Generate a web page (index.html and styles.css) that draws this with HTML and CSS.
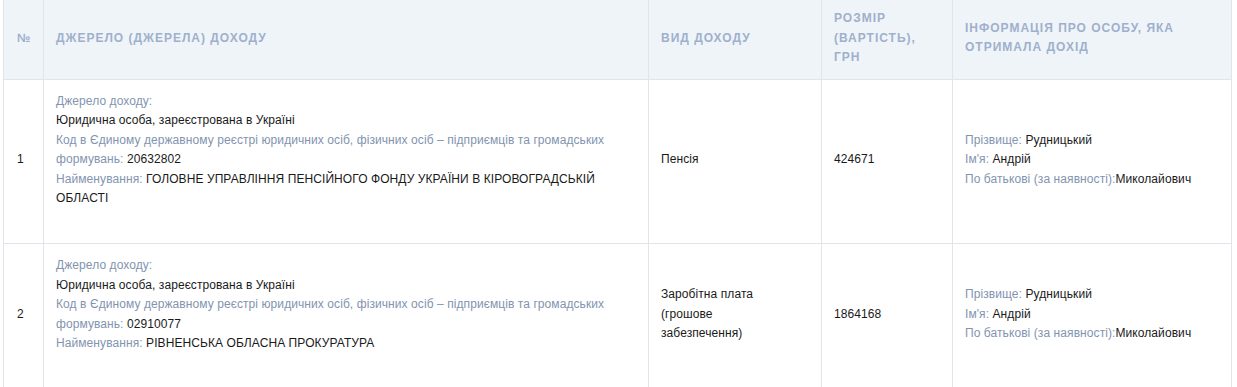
FILE: index.html
```html
<!DOCTYPE html>
<html lang="uk">
<head>
<meta charset="utf-8">
<link rel="stylesheet" href="styles.css">
</head>
<body>
<table class="income">
  <colgroup>
    <col class="c-num">
    <col class="c-src">
    <col class="c-type">
    <col class="c-size">
    <col class="c-info">
  </colgroup>
  <thead>
    <tr>
      <th>№</th>
      <th>Джерело (джерела) доходу</th>
      <th>Вид доходу</th>
      <th>Розмір (вартість), грн</th>
      <th>Інформація про особу, яка отримала дохід</th>
    </tr>
  </thead>
  <tbody>
    <tr>
      <td>1</td>
      <td class="src">
        <div class="lbl">Джерело доходу:</div>
        <div>Юридична особа, зареєстрована в Україні</div>
        <div><span class="lbl">Код в Єдиному державному реєстрі юридичних осіб, фізичних осіб – підприємців та громадських формувань: </span>20632802</div>
        <div><span class="lbl">Найменування: </span>ГОЛОВНЕ УПРАВЛІННЯ ПЕНСІЙНОГО ФОНДУ УКРАЇНИ В КІРОВОГРАДСЬКІЙ ОБЛАСТІ</div>
      </td>
      <td><div class="type">Пенсія</div></td>
      <td>424671</td>
      <td>
        <div><span class="lbl">Прізвище: </span>Рудницький</div>
        <div><span class="lbl">Ім'я: </span>Андрій</div>
        <div><span class="lbl">По батькові (за наявності):</span>Миколайович</div>
      </td>
    </tr>
    <tr>
      <td>2</td>
      <td class="src">
        <div class="lbl">Джерело доходу:</div>
        <div>Юридична особа, зареєстрована в Україні</div>
        <div><span class="lbl">Код в Єдиному державному реєстрі юридичних осіб, фізичних осіб – підприємців та громадських формувань: </span>02910077</div>
        <div><span class="lbl">Найменування: </span>РІВНЕНСЬКА ОБЛАСНА ПРОКУРАТУРА</div>
      </td>
      <td><div class="type">Заробітна плата (грошове забезпечення)</div></td>
      <td>1864168</td>
      <td>
        <div><span class="lbl">Прізвище: </span>Рудницький</div>
        <div><span class="lbl">Ім'я: </span>Андрій</div>
        <div><span class="lbl">По батькові (за наявності):</span>Миколайович</div>
      </td>
    </tr>
  </tbody>
</table>
</body>
</html>
```
FILE: styles.css
```css
html, body {
  margin: 0;
  padding: 0;
  background: #ffffff;
}
body {
  padding: 0 7px 0 3px;
  font-family: "Liberation Sans", Arial, sans-serif;
  font-size: 12px;
  line-height: 19.5px;
  color: #1a1a1a;
}
.income {
  width: 1228px;
  border-collapse: collapse;
  table-layout: fixed;
}
.c-num { width: 40px; }
.c-src { width: 605px; }
.c-type { width: 173px; }
.c-size { width: 131px; }
.c-info { width: 279px; }

.income th,
.income td {
  border: 1px solid #e1e5ea;
  text-align: left;
  vertical-align: middle;
}
.income thead tr th { border-top: none; }
.income th {
  background: #eff4f9;
  color: #9fb0cc;
  font-weight: bold;
  text-transform: uppercase;
  letter-spacing: 1px;
  padding: 9px 12px 11px;
}
.income th:first-child { letter-spacing: 0; }
.income td {
  padding: 12px 16px 15px 12px;
  letter-spacing: 0.08px;
}
.income th:first-child,
.income td:first-child {
  padding-left: 13px;
  padding-right: 4px;
}
.type {
  max-width: 100px;
}
.src div:last-child {
  margin-bottom: 19.5px;
}
.lbl {
  color: #8294b0;
}
```
